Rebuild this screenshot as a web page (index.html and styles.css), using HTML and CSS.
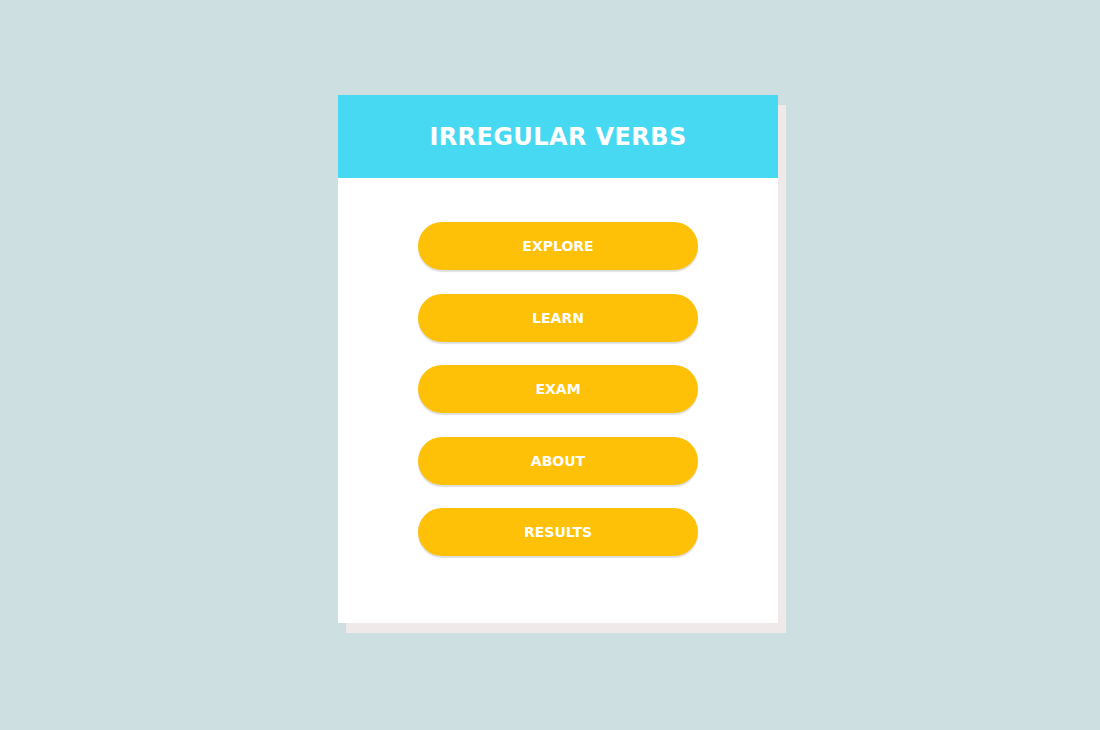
FILE: index.html
```html
<!DOCTYPE html>
<html>
<head>
<meta charset="utf-8">
<link rel="stylesheet" href="styles.css">
</head>
<body>
<div class="page">
  <div class="card">
    <div class="card-header">
      <h1 class="title">IRREGULAR VERBS</h1>
    </div>
    <div class="menu">
      <button class="menu-btn">EXPLORE</button>
      <button class="menu-btn">LEARN</button>
      <button class="menu-btn">EXAM</button>
      <button class="menu-btn">ABOUT</button>
      <button class="menu-btn">RESULTS</button>
    </div>
  </div>
</div>
</body>
</html>
```

FILE: styles.css
```css
html, body {
  margin: 0;
  padding: 0;
}
body {
  background: #cddfe1;
  font-family: "DejaVu Sans", "Open Sans", sans-serif;
  width: 1100px;
  height: 730px;
  overflow: hidden;
}
.page {
  padding-top: 95px;
  padding-left: 16px;
  display: flex;
  justify-content: center;
}
.card {
  width: 440px;
  height: 528px;
  background: #ffffff;
  box-shadow: 8px 10px 0 0 #efe9e9;
  display: flex;
  flex-direction: column;
}
.card-header {
  height: 83px;
  background: #48d9f2;
  display: flex;
  align-items: center;
  justify-content: center;
}
.title {
  margin: 0;
  color: #ffffff;
  font-size: 24px;
  font-weight: 700;
  letter-spacing: 0.4px;
  padding-top: 1px;
}
.menu {
  padding-top: 44px;
  display: flex;
  flex-direction: column;
  align-items: center;
  gap: 23.5px;
}
.menu-btn {
  width: 280px;
  height: 48px;
  border: none;
  border-radius: 24px;
  background: #ffc107;
  color: #ffffff;
  font-family: "DejaVu Sans", "Open Sans", sans-serif;
  font-size: 14px;
  font-weight: 700;
  letter-spacing: 0;
  box-shadow: 0 2px 1px rgba(0, 0, 0, 0.13);
  padding: 0;
}
```
